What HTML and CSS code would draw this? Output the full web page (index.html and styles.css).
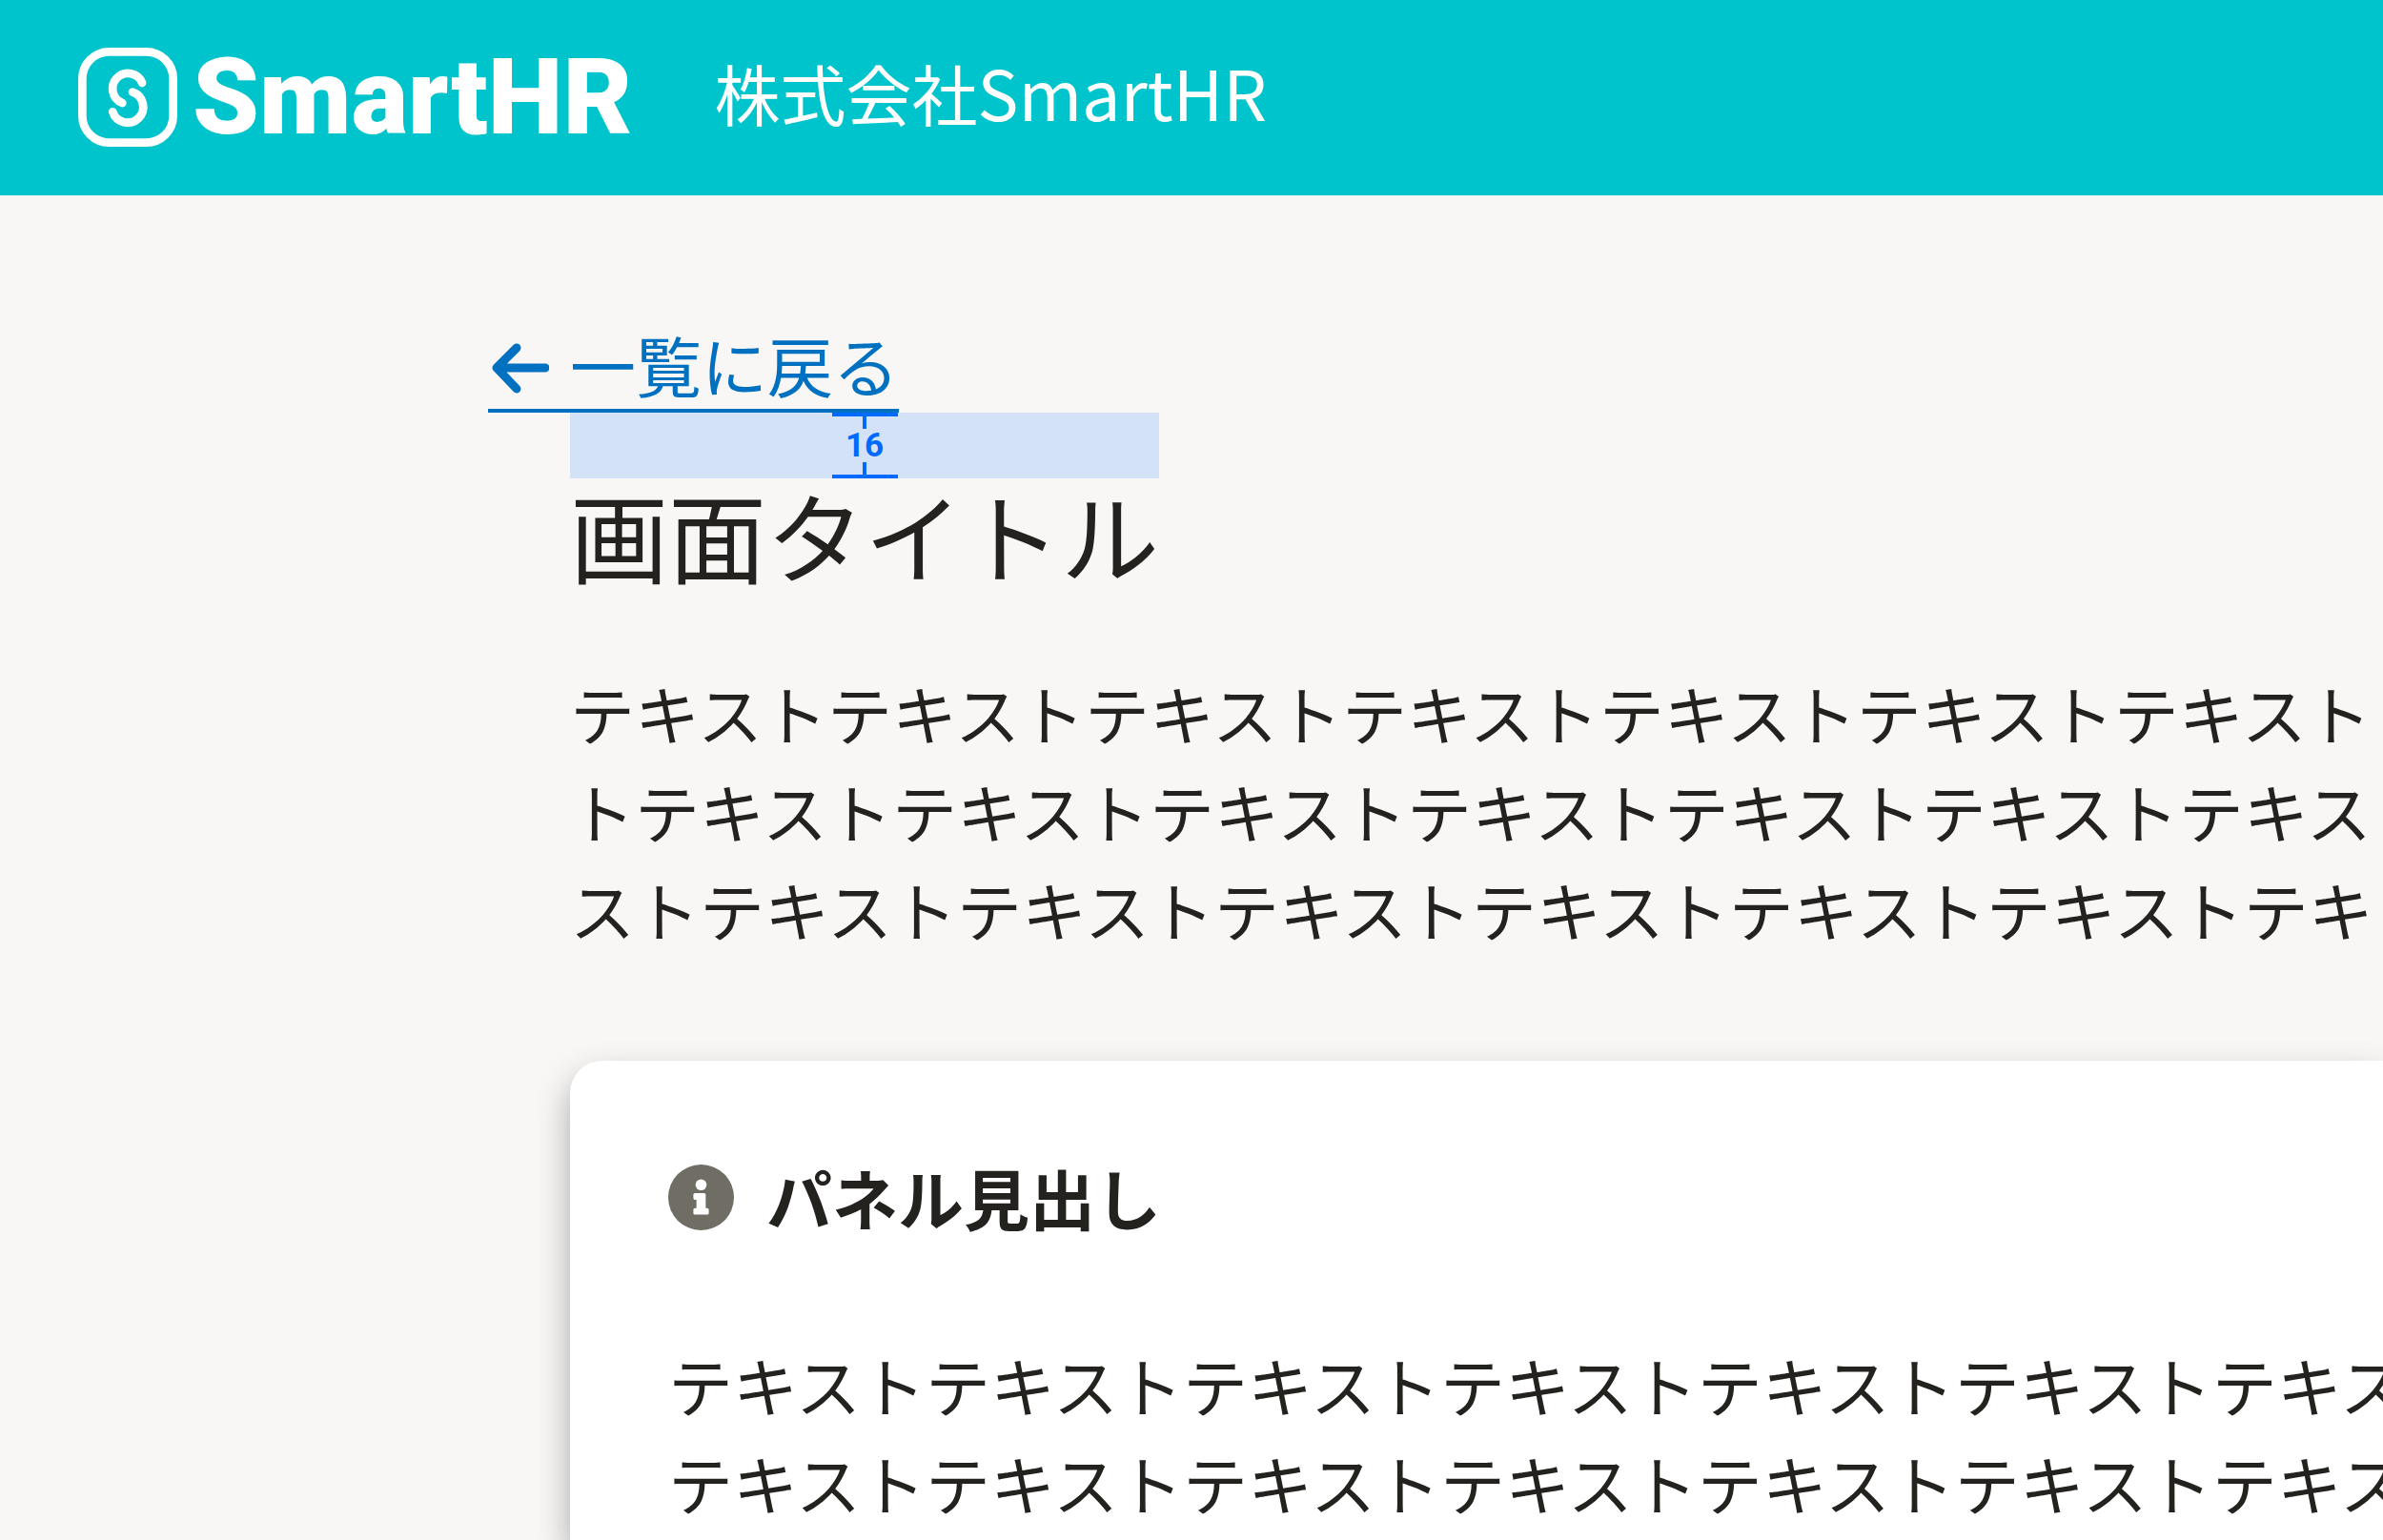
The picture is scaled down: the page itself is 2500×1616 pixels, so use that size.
FILE: index.html
```html
<!DOCTYPE html>
<html lang="ja">
<head>
<meta charset="utf-8">
<title>画面タイトル | SmartHR</title>
<link rel="stylesheet" href="styles.css">
</head>
<body>
<header class="header">
  <div class="logo">
    <svg class="logo-mark" viewBox="0 0 310 310" fill="none" stroke="#fff" stroke-width="26" aria-hidden="true">
      <rect x="13" y="13" width="284" height="284" rx="84"/>
      <g stroke-linecap="round">
        <path d="M200 110A48 48 0 1 0 138 173"/>
        <path d="M170 139A49 49 0 1 1 108 201"/>
      </g>
    </svg>
    <span class="logo-name">SmartHR</span>
  </div>
  <p class="company">株式会社<span class="company-latin">SmartHR</span></p>
</header>
<main class="main">
  <div class="heading-block">
    <a class="back-link" href="#">
      <svg class="back-icon" viewBox="0 0 60 69" fill="none" stroke="currentColor" stroke-width="9" stroke-linecap="round" stroke-linejoin="round" aria-hidden="true">
        <path d="M56 34H7M26 13L5 34L26 56"/>
      </svg>
      <span class="back-label">一覧に戻る</span>
    </a>
    <div class="title-block">
      <div class="spacing">
        <div class="measure">
          <span class="measure-end measure-top"></span>
          <span class="measure-value">16</span>
          <span class="measure-end measure-bottom"></span>
        </div>
      </div>
      <h1 class="title">画面タイトル</h1>
    </div>
  </div>
  <p class="text">テキストテキストテキストテキストテキストテキストテキスト<br>トテキストテキストテキストテキストテキストテキストテキス<br>ストテキストテキストテキストテキストテキストテキストテキ</p>
  <section class="panel">
    <h2 class="panel-title">
      <svg class="info-icon" viewBox="0 0 512 512" aria-hidden="true">
        <circle cx="256" cy="256" r="256" fill="#706d65"/>
        <circle cx="256" cy="158" r="43" fill="#fff"/>
        <path fill="#fff" d="M208 222h72a12 12 0 0 1 12 12v106h12a12 12 0 0 1 12 12v26a12 12 0 0 1-12 12h-96a12 12 0 0 1-12-12v-26a12 12 0 0 1 12-12h12v-66h-12a12 12 0 0 1-12-12v-28a12 12 0 0 1 12-12z"/>
      </svg>
      <span>パネル見出し</span>
    </h2>
    <p class="text">テキストテキストテキストテキストテキストテキストテキス<br>テキストテキストテキストテキストテキストテキストテキス</p>
  </section>
</main>
</body>
</html>
```
FILE: styles.css
```css
* {
  box-sizing: border-box;
}

body {
  display: flex;
  flex-direction: column;
  margin: 0;
  min-height: 100vh;
  overflow: hidden;
  background: #f8f7f6;
  color: #23221e;
  font-family: "Noto Sans CJK JP", sans-serif;
  font-size: 69px;
}

h1,
h2,
p {
  margin: 0;
}

.header {
  display: flex;
  align-items: center;
  gap: 86px;
  padding: 49px 82px 51px;
  background: #00c4cc;
  color: #fff;
}

.logo {
  display: flex;
  align-items: center;
  gap: 16px;
}

.logo-mark {
  width: 104px;
  height: 104px;
}

.logo-name {
  font-family: Roboto, sans-serif;
  font-size: 112px;
  font-weight: 900;
  line-height: 104px;
}

.company {
  padding-bottom: 10px;
  line-height: 94px;
  white-space: nowrap;
}

.company-latin {
  font-size: 72px;
}

.main {
  display: flex;
  flex: 1;
  flex-direction: column;
  padding: 138px 0 0 598px;
}

.heading-block {
  display: flex;
  flex-direction: column;
  align-items: flex-start;
}

.back-link {
  display: flex;
  align-items: center;
  gap: 22px;
  margin-left: -86px;
  padding-left: 4px;
  border-bottom: 4px solid #0071c1;
  color: #0071c1;
  text-decoration: none;
}

.back-label {
  padding-bottom: 8px;
  line-height: 78px;
}

.back-icon {
  width: 60px;
  height: 69px;
}

.spacing {
  display: flex;
  justify-content: center;
  height: 69px;
  background: #d4e2f8;
}

.measure {
  display: flex;
  flex-direction: column;
  justify-content: space-between;
  align-items: center;
  width: 69px;
  color: #006aff;
}

.measure-end {
  display: flex;
  justify-content: center;
  width: 100%;
}

.measure-end::before {
  content: "";
  width: 4px;
  height: 13px;
  background: currentColor;
}

.measure-top {
  border-top: 4px solid;
}

.measure-bottom {
  border-bottom: 4px solid;
}

.measure-value {
  font: bold 35px/35px Roboto, sans-serif;
}

.title {
  padding-bottom: 12px;
  font-size: 103px;
  font-weight: 400;
  line-height: 117px;
}

.text {
  font-size: 68px;
  line-height: 103px;
  white-space: nowrap;
}

.main > .text {
  margin-top: 65px;
}

.panel {
  display: flex;
  flex: 1;
  flex-direction: column;
  gap: 102px;
  margin-top: 108px;
  padding: 100px 0 0 103px;
  border-radius: 34px 0 0 0;
  background: #fff;
  box-shadow: 0 17px 34px rgba(51, 51, 51, 0.4);
}

.panel-title {
  display: flex;
  align-items: center;
  gap: 34px;
  font-size: 69px;
  font-weight: 700;
  line-height: 86px;
}

.info-icon {
  width: 69px;
  height: 69px;
}
```
